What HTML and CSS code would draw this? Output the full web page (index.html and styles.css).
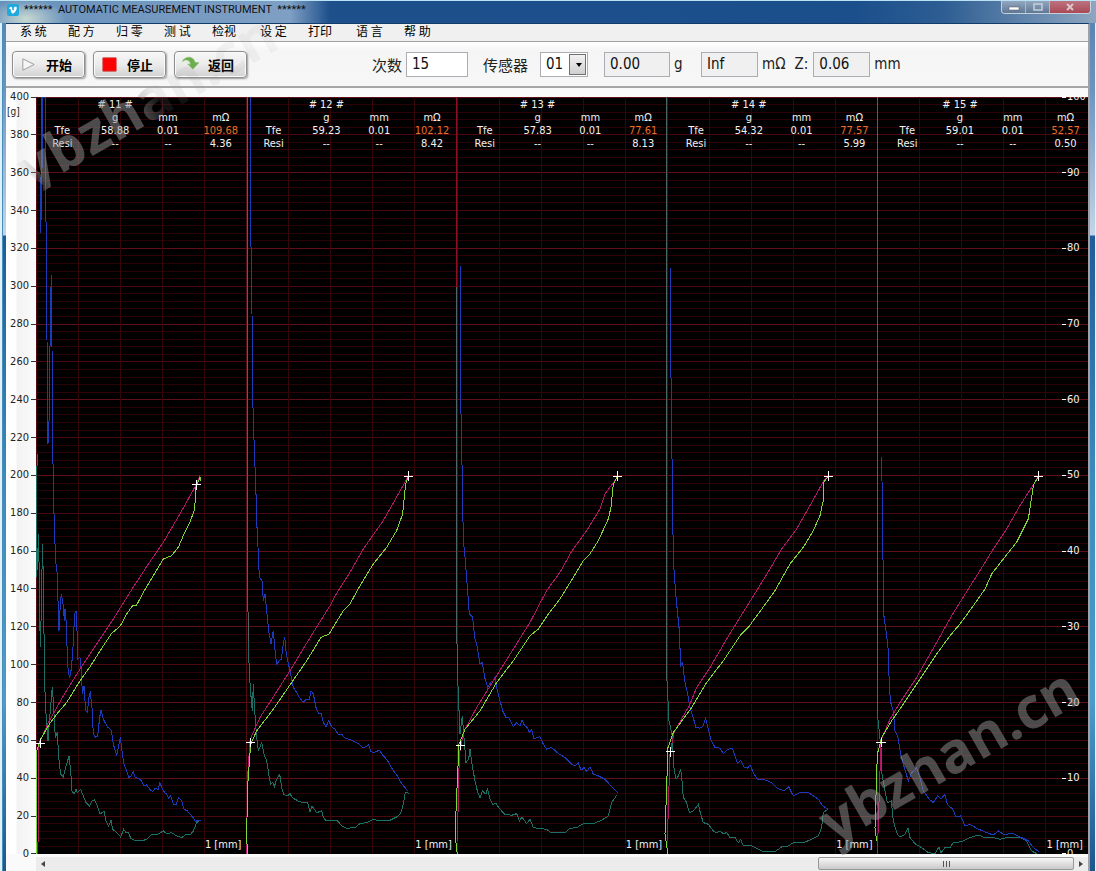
FILE: index.html
```html
<!DOCTYPE html>
<html lang="zh-CN">
<head>
	<meta charset="UTF-8">
	<title>AUTOMATIC MEASUREMENT INSTRUMENT</title>
	<link rel="stylesheet" href="styles.css">
</head>
<body>
	<div class="window">
		<header class="titlebar">
			<svg class="logo" viewBox="0 0 12 12">
				<rect width="12" height="12" rx="2" fill="#1fa9dc"/>
				<path d="M2 4 4 2.8C5 2.6 5 4 5.4 5.600 5.800 7 6.200 7 7 5.500 7.500 4.500 7 4.200 6.300 4.500 7 2.400 9.600 2 9.800 3.700 9.900 5.700 7.600 9.200 6 9.600 4.200 10 3.900 5.300 3.300 4.700L2.500 4.900Z" fill="#fff"/>
			</svg>
			<span class="title">******&nbsp; AUTOMATIC MEASUREMENT INSTRUMENT &nbsp;******</span>
			<div class="window-buttons">
				<button class="win-btn" aria-label="最小化"><svg viewBox="0 0 12 8"><rect x="1" y="4" width="10" height="3" fill="#fff" stroke="#556" stroke-width=".5"/></svg></button>
				<button class="win-btn" aria-label="最大化"><svg viewBox="0 0 12 8"><rect x="2" y="1" width="8" height="6" fill="none" stroke="#c5d0dd" stroke-width="1.5"/></svg></button>
				<button class="win-btn win-close" aria-label="关闭"><svg viewBox="0 0 12 8"><path d="M3 1 9 7M9 1 3 7" stroke="#dcc5ca" stroke-width="2"/></svg></button>
			</div>
		</header>

		<div class="client">
			<nav class="menu">
				<a href="#">系 统</a>
				<a href="#">配 方</a>
				<a href="#">归 零</a>
				<a href="#">测 试</a>
				<a href="#">检视</a>
				<a href="#">设 定</a>
				<a href="#">打印</a>
				<a href="#">语 言</a>
				<a href="#">帮 助</a>
			</nav>

			<div class="toolbar">
				<div class="actions">
					<button class="action">
						<svg viewBox="0 0 18 18"><path d="M3 3 15 9 3 15Z" fill="#f6f6f6" stroke="#999"/></svg>
						开始
					</button>
					<button class="action">
						<svg viewBox="0 0 18 18"><path d="M2 2H16V16H2Z" fill="#f00" stroke="#c33"/></svg>
						停止
					</button>
					<button class="action">
						<svg viewBox="0 0 18 18"><path d="M0 6C3 0 12-1 14 7H18L11.500 14 6 8.500H9C8 4 4 3 0 6Z" fill="#6cad50" stroke="#8bbf75" stroke-width=".6"/><path d="M0 7C4 4 7 5 8 9" fill="none" stroke="#d3e8c9"/></svg>
						返回
					</button>
				</div>
				<div class="fields">
					<label for="count">次数</label>
					<input type="text" id="count" class="count" value="15">
					<label for="sensor">传感器</label>
					<span class="select">
						<select id="sensor">
							<option>01</option>
							<option>02</option>
						</select>
					</span>
					<input type="text" id="force" class="force" value="0.00" readonly>
					<label for="force" class="unit-g">g</label>
					<input type="text" id="resistance" value="Inf" readonly>
					<label for="resistance">mΩ</label>
					<label for="depth" class="unit-z">Z:</label>
					<input type="text" id="depth" value="0.06" readonly>
					<label for="depth">mm</label>
				</div>
			</div>

			<main class="chart">
				<div class="left-axis">
					<span class="axis-unit">[g]</span>
					<ul class="scale" id="force-scale"></ul>
				</div>
				<div class="plot">
					<svg class="traces" viewBox="0 0 3156 2268" preserveAspectRatio="none" id="traces"></svg>
					<div class="readouts" id="readouts"></div>
					<div class="spans" id="spans"></div>
					<ul class="scale right-scale" id="resistance-scale"></ul>
				</div>
			</main>

			<div class="scrollbar">
				<button class="scroll-arrow" aria-label="向左"><svg viewBox="0 0 4 6"><path d="M4 0V6L0 3Z" fill="#444"/></svg></button>
				<div class="scroll-track">
					<div class="scroll-thumb"><i></i><i></i><i></i></div>
				</div>
				<button class="scroll-arrow" aria-label="向右"><svg viewBox="0 0 4 6"><path d="M0 0V6L4 3Z" fill="#444"/></svg></button>
			</div>
		</div>

		<span class="watermark watermark-top">ybzhan.cn</span>
		<span class="watermark watermark-bottom">ybzhan.cn</span>
	</div>

	<script src="chart.js"></script>
</body>
</html>
```
FILE: styles.css
```css
* {
	margin: 0;
	padding: 0;
	box-sizing: border-box;
}

body {
	font-family: "DejaVu Sans Condensed", "Noto Sans", "Noto Sans CJK SC", sans-serif;
	font-size: 11px;
	color: #222;
}

button,
input,
select {
	font-family: inherit;
}

ul {
	list-style: none;
}

.window {
	position: relative;
	display: flex;
	flex-direction: column;
	min-height: 100vh;
	overflow: hidden;
	padding: 0 6px 0 6px;
	border-top: 1px solid #b9e2f5;
	background:
		linear-gradient(90deg, #dff1fb 2px, #4a8fbb 2px, #4a8fbb 3px, transparent 3px, transparent calc(100% - 1px), #dff1fb calc(100% - 1px)),
		linear-gradient(180deg, #5580ad 0, #6c94be 90px, #c3d6e8 234px, #1f5c99 235px, #3a8cbd 480px, #4a9cca 700px, #1c568c 100%);
}

/* title bar */
.titlebar {
	display: flex;
	align-items: flex-start;
	height: 22px;
	margin: 0 -6px;
	padding: 0 5px 0 7px;
	background:
		radial-gradient(ellipse 40px 20px at 26px 18px, rgba(225, 235, 215, 0.8), transparent),
		linear-gradient(90deg, #6791bb 0, #7f9fc4 290px, #1d4f8b 330px, #1b4f8c 78%, #2d5d92 86%, #8ea6c0 100%);
}

.logo {
	width: 12px;
	height: 12px;
	margin-top: 3px;
}

.title {
	margin-left: 5px;
	font-family: Roboto, sans-serif;
	font-size: 11px;
	line-height: 18px;
	color: #111;
}

.window-buttons {
	display: flex;
	margin-left: auto;
	border: 1px solid #c4d2e0;
	border-top: 0;
	border-radius: 0 0 4px 4px;
	overflow: hidden;
}

.win-btn {
	display: flex;
	align-items: center;
	justify-content: center;
	width: 24px;
	height: 12px;
	border: 0;
	border-right: 1px solid #a9bbcd;
	background: linear-gradient(#93a7bf, #5f7894);
}

.win-btn svg {
	width: 12px;
	height: 8px;
}

.win-close {
	width: 40px;
	border-right: 0;
	background: linear-gradient(#bd7380, #a94a55);
}

.client {
	flex: 1;
	display: flex;
	flex-direction: column;
	border-top: 1px solid #123c69;
	border-right: 2px solid #a0a0a8;
	background: #fafafa;
}

/* menu */
.menu {
	display: flex;
	height: 18px;
	padding-left: 14px;
	border-bottom: 1px solid #a0a0a0;
	background: #f0f0f0;
}

.menu a {
	width: 48px;
	font-family: "Noto Sans CJK SC", sans-serif;
	font-size: 12px;
	line-height: 14px;
	color: #000;
	text-decoration: none;
	white-space: nowrap;
}

/* toolbar */
.toolbar {
	display: flex;
	align-items: center;
	height: 46px;
	padding-left: 6px;
	border-bottom: 2px solid #a6a6a6;
	background: linear-gradient(#fff, #f5f5f5 20%, #f7f7f7);
}

.actions {
	display: flex;
	gap: 8px;
}

.action {
	display: flex;
	align-items: center;
	gap: 9px;
	width: 73px;
	height: 27px;
	padding-left: 7px;
	border: 1px solid #8f8f8f;
	border-radius: 4px;
	background: linear-gradient(#f7f7f7, #ebebeb 50%, #d2d2d2);
	box-shadow: inset 0 0 0 1px #fafafa, 1px 1px 2px #999;
	font-family: "Noto Sans CJK SC", sans-serif;
	font-size: 13px;
	font-weight: 700;
	color: #000;
	white-space: nowrap;
}

.action svg {
	flex: none;
	width: 17px;
	height: 17px;
}

.fields {
	display: flex;
	align-items: center;
	margin-left: 121px;
	color: #222;
}

.fields label {
	margin: 0 4px;
	font-size: 15px;
}

.fields label[for="count"],
.fields label[for="sensor"] {
	font-family: "Noto Sans CJK SC", sans-serif;
}

.fields label[for="sensor"] {
	margin: 0 12px 0 15px;
}

.fields input,
.fields select {
	width: 57px;
	height: 25px;
	padding: 0 5px;
	border: 1px solid #abadb3;
	background: #fff;
	font-size: 15px;
	color: #111;
}

.fields input[readonly] {
	background: #f0f0f0;
}

.fields .count {
	width: 62px;
}

.fields .force {
	width: 66px;
	margin-left: 16px;
}

.fields .unit-g {
	width: 23px;
	margin-right: 4px;
}

.fields .unit-z {
	margin: 0 5px;
}

.select {
	position: relative;
}

.fields select {
	width: 48px;
	appearance: none;
}

.select::before {
	content: "";
	position: absolute;
	top: 2px;
	right: 2px;
	width: 15px;
	bottom: 2px;
	border: 1px solid #707070;
	background: linear-gradient(#f2f2f2, #cfcfcf);
	pointer-events: none;
}

.select::after {
	content: "";
	position: absolute;
	top: 11px;
	right: 6px;
	border: 3px solid transparent;
	border-top: 4px solid #000;
	border-bottom: 0;
	pointer-events: none;
}

/* chart */
.chart {
	flex: 1;
	display: flex;
	margin-top: 9px;
}

.left-axis {
	position: relative;
	width: 30px;
	background: linear-gradient(90deg, #fff 10px, #f3f3f3 11px, #fafafa);
}

.axis-unit {
	position: absolute;
	top: 9px;
	left: 1px;
	font-size: 10px;
}

.scale {
	display: flex;
	flex-direction: column;
	justify-content: space-between;
	position: relative;
	height: calc(100% + 14px);
	margin: -7px 0;
}

.scale li {
	display: flex;
	align-items: center;
	justify-content: flex-end;
	height: 14px;
	line-height: 14px;
}

.scale li::after {
	content: "";
	width: 5px;
	height: 1px;
	margin-left: 2px;
	background: #333;
}

.plot {
	position: relative;
	flex: 1;
	overflow: hidden;
	background: #000;
	color: #f2f2f2;
}

.traces {
	position: absolute;
	width: 100%;
	height: 100%;
	fill: none;
	stroke-width: 1px;
	shape-rendering: crispEdges;
}

.traces * {
	vector-effect: non-scaling-stroke;
}

.grid-minor {
	stroke: #2b0306;
}

.grid-major {
	stroke: #4c080d;
}

.grid-strong {
	stroke: #621016;
}

.grid-vertical {
	stroke: #34060a;
}

.track-start {
	stroke: #560a14;
}

.contact {
	stroke: #4c6666;
}

.contact-force {
	stroke: #8a1022;
}

.blue {
	stroke: #1a3cb8;
}

.teal {
	stroke: #1c6f64;
}

.magenta {
	stroke: #b0186c;
}

.green {
	stroke: #7fd636;
}

.cursor {
	stroke: #fff;
}

.readouts {
	position: relative;
	display: grid;
	grid-template-columns: repeat(5, 1fr);
	margin-right: -4px;
	padding-top: 1px;
}

.readouts table {
	width: 100%;
	table-layout: fixed;
	border-collapse: collapse;
	text-align: center;
	line-height: 13px;
}

.readouts th,
.readouts td {
	height: 13px;
	font-weight: 400;
}

.readouts .limit {
	color: #e8702a;
}

.spans {
	position: absolute;
	right: 0;
	bottom: 2px;
	left: 0;
	display: grid;
	grid-template-columns: repeat(5, 1fr);
	text-align: right;
}

.spans span {
	padding-right: 5px;
	line-height: 14px;
}

.right-scale {
	position: absolute;
	top: 0;
	right: 0;
	width: 26px;
}

.right-scale li {
	justify-content: flex-start;
}

.right-scale li::after {
	order: -1;
	width: 4px;
	margin: 0 1px 0 0;
	background: #fff;
}

/* scroll bar */
.scrollbar {
	display: flex;
	height: 17px;
	margin-left: 30px;
	border-top: 3px solid #fafafa;
	background: #ececec;
}

.scroll-arrow {
	display: flex;
	align-items: center;
	justify-content: center;
	width: 14px;
	border: 0;
	background: transparent;
}

.scroll-arrow svg {
	width: 4px;
	height: 6px;
}

.scroll-track {
	flex: 1;
	display: flex;
	justify-content: flex-end;
}

.scroll-thumb {
	display: flex;
	align-items: center;
	justify-content: center;
	gap: 2px;
	width: 25%;
	height: 13px;
	border: 1px solid #979797;
	border-radius: 2px;
	background: linear-gradient(#f5f5f5, #e3e3e3 45%, #c9c9c9);
}

.scroll-thumb i {
	width: 1px;
	height: 6px;
	background: #555;
}

/* watermark */
.watermark {
	position: absolute;
	font-family: "Open Sans", sans-serif;
	font-size: 57px;
	font-weight: 700;
	line-height: 56px;
	color: rgba(150, 150, 150, 0.5);
	transform: rotate(-30deg);
	transform-origin: 0 50px;
	white-space: nowrap;
	pointer-events: none;
}

.watermark-top {
	top: 140px;
	left: 32px;
	background: linear-gradient(90deg, rgba(150, 150, 150, 0.1) 2%, rgba(150, 150, 150, 0.5) 6%, rgba(150, 150, 150, 0.5) 46%, rgba(150, 150, 150, 0.12) 54%, rgba(150, 150, 150, 0.08));
	background-clip: text;
	-webkit-background-clip: text;
	color: transparent;
}

.watermark-bottom {
	bottom: 20px;
	left: calc(100% - 262px);
}
```
FILE: chart.js
```js
// 3 units per screen pixel; trace points are relative to the y = 1149 line
const WIDTH = 3156;
const HEIGHT = 2268;
const TRACE_TOP = 1149;

const tracks = [
	{
		no: 11, x: -108, force: "58.88", travel: "0.01", tfe: "109.68", resi: "4.36",
		cursors: [[121, 787], [590, 13]],
		blue: "124,-1149 123,-900 121,-741 125,-820 128,-1149 136,-1149 139,-600 141,-420 144,-110 148,-200 151,-500 154,-615 156,-400 157,-150 160,0 161,60 164,170 168,250 172,280 175,400 177,450 181,370 184,340 190,375 193,420 195,385 200,440 202,550 208,588 212,580 218,520 224,400 228,390 231,450 234,535 240,530 244,570 247,640 252,615 257,690 262,695 268,640 271,635 276,680 280,760 287,770 293,765 299,710 303,688 310,715 322,738 334,748 340,790 350,824 355,800 361,768 366,810 372,850 380,870 386,890 392,886 400,873 405,888 415,893 425,900 432,915 440,912 450,926 458,932 466,922 474,926 480,905 486,922 494,935 500,940 506,952 512,945 520,970 528,972 536,950 545,960 552,985 562,990 570,1000 580,1010 586,1022 594,1018 602,1020",
		teal: "112,-80 110,0 110,290 116,160 119,400 121,498 125,350 127,190 131,320 133,590 138,700 144,780 150,700 157,618 161,680 166,770 172,755 176,830 182,880 190,888 197,860 203,840 207,825 212,870 216,930 222,940 228,925 232,935 242,925 250,945 258,965 268,975 276,960 284,957 292,975 300,1000 312,990 318,1020 326,1035 333,1018 338,1045 350,1055 362,1068 371,1045 378,1055 385,1055 393,1073 410,1080 425,1080 440,1075 455,1060 470,1062 490,1050 500,1058 515,1055 530,1065 545,1070 555,1062 570,1062 580,1050 590,1025 600,1018",
		magenta: "111,1120 116,1060 117,800 122,778 145,725 165,690 190,645 240,565 290,490 340,415 390,335 440,258 490,185 540,100 590,10 600,-15",
		green: "111,1120 109,1000 110,810 122,775 148,730 170,700 200,665 240,600 270,558 310,495 335,458 360,437 380,400 398,375 410,373 430,335 460,285 490,235 515,225 535,200 550,165 570,125 584,85 588,20 600,-10 602,0"
	},
	{
		no: 12, x: 612, force: "59.23", travel: "0.01", tfe: "102.12", resi: "8.42",
		cursors: [[31, 785], [505, -13]],
		contact: "22,-1149 23,300 25,480",
		blue: "32,-1149 33,-700 36,-500 38,-250 44,-60 47,0 50,120 54,200 58,290 66,300 70,360 75,340 80,390 86,450 93,490 97,465 100,450 104,500 110,550 118,540 124,535 130,490 134,468 138,510 143,540 150,570 160,620 170,635 178,650 190,665 198,655 208,655 213,630 220,640 228,680 236,698 243,698 250,725 258,738 266,720 275,738 285,745 295,762 305,760 315,772 335,778 355,788 368,800 378,798 386,792 392,812 402,815 418,808 430,825 442,838 455,862 470,882 485,908 505,932",
		teal: "25,480 28,580 34,660 37,690 40,610 44,690 50,770 55,810 65,785 72,820 80,840 88,890 92,910 98,905 103,917 110,895 119,880 125,920 132,942 145,943 150,937 155,948 165,955 180,963 203,965 210,992 216,975 230,995 245,990 250,1008 258,1020 275,1020 293,1020 305,1035 320,1042 345,1040 360,1028 380,1025 400,1015 420,1020 450,1018 470,1008 482,998 490,970 496,935 508,937",
		magenta: "20,1120 22,900 30,780 35,765 60,710 100,648 150,570 180,520 220,455 270,375 290,338 330,275 370,205 430,120 495,5 505,-13",
		green: "22,1120 20,1050 24,900 32,790 50,750 100,685 155,605 200,540 243,470 267,460 310,390 330,370 360,315 400,250 440,200 470,150 488,100 497,10 505,-13"
	},
	{
		no: 13, x: 1242, force: "57.83", travel: "0.01", tfe: "77.61", resi: "8.13",
		cursors: [[31, 793], [503, -13]],
		contactForce: "20,-1149 20,-580",
		contact: "20,-580 20,400 22,570",
		blue: "31,-642 33,-200 37,0 40,180 46,240 52,320 58,400 68,410 74,470 82,500 90,550 97,545 104,590 113,620 122,605 130,600 135,588 140,620 150,660 158,690 168,710 178,712 190,738 200,725 210,735 216,718 224,735 232,740 238,755 245,745 252,775 260,770 270,768 280,790 290,805 305,800 325,818 345,830 365,850 375,855 385,846 393,868 402,860 410,872 420,858 430,880 445,885 465,895 480,912 505,937",
		teal: "22,570 25,640 30,760 37,705 42,770 48,845 56,835 60,805 66,850 74,895 82,930 90,950 97,930 108,940 112,922 120,955 128,970 138,968 150,985 165,1000 185,1003 200,998 208,1020 216,1008 230,1028 240,1015 250,1040 270,1043 290,1045 305,1056 345,1055 360,1042 380,1040 400,1028 430,1028 455,1018 475,1005 485,965 500,943",
		magenta: "22,1080 28,820 40,755 80,680 130,600 190,505 240,425 290,330 330,275 365,212 410,150 450,85 465,40 495,0 503,-13",
		green: "22,1120 15,1060 22,900 27,790 45,745 90,690 140,605 190,540 240,465 265,445 295,400 330,355 370,290 400,240 420,220 445,180 475,115 483,80 490,10 503,-13"
	},
	{
		no: 14, x: 1872, force: "54.32", travel: "0.01", tfe: "77.57", resi: "5.99",
		cursors: [[31, 813], [505, -13]],
		contact: "20,-1149 21,600",
		blue: "30,-642 34,-200 37,0 40,240 48,350 58,450 62,555 68,545 74,600 82,635 90,680 98,705 108,740 118,742 128,738 137,712 145,745 152,775 165,800 180,802 190,818 203,805 217,802 225,825 233,848 242,838 252,858 262,862 270,852 280,875 292,895 315,897 335,905 352,922 372,930 386,918 400,945 420,935 445,935 460,945 475,955 488,975 505,985",
		teal: "21,600 27,720 38,770 40,850 48,895 55,885 62,865 66,900 70,950 80,965 88,995 100,990 115,970 122,1000 130,1025 145,1030 160,1050 170,1056 180,1050 190,1058 200,1055 210,1070 225,1070 235,1085 242,1075 250,1095 270,1092 285,1100 305,1110 345,1112 365,1098 385,1095 400,1085 430,1085 455,1075 475,1065 485,1040 490,995 503,985",
		magenta: "22,1080 30,820 42,755 90,670 110,620 150,560 200,475 240,410 290,330 330,265 365,205 410,145 450,75 492,0 505,-13",
		green: "24,1120 15,1060 24,800 40,755 95,680 140,605 190,540 240,465 265,440 320,365 345,330 390,250 430,200 460,150 480,105 490,60 491,5 505,-13"
	},
	{
		no: 15, x: 2502, force: "59.01", travel: "0.01", tfe: "52.57", resi: "0.50",
		cursors: [[33, 785], [505, -13]],
		contact: "22,-1149 22,700",
		blue: "33,-72 36,0 38,150 41,400 48,450 55,510 58,620 62,665 70,690 75,750 84,770 92,820 100,850 115,900 125,875 133,870 140,860 150,890 160,930 178,955 190,965 203,945 213,955 224,940 232,970 248,985 258,1008 272,1005 285,1035 300,1030 320,1042 350,1055 370,1062 386,1050 400,1060 430,1058 455,1070 475,1080 490,1100 507,1112",
		teal: "22,700 33,800 36,880 45,930 52,965 64,960 70,1020 82,1060 90,1068 105,1060 114,1042 120,1070 135,1088 155,1100 175,1115 195,1118 207,1098 213,1115 225,1100 240,1100 250,1085 275,1082 300,1070 325,1062 345,1070 370,1070 390,1075 410,1070 450,1070 470,1080 485,1110 500,1118",
		magenta: "22,1120 33,780 60,715 90,665 140,590 200,485 245,405 295,325 330,270 370,205 410,145 450,75 495,5 505,-13",
		green: "20,1080 15,1040 22,820 35,770 65,720 100,670 150,595 200,520 240,465 270,430 310,375 345,325 365,280 400,235 440,185 475,115 485,50 490,15 505,-13"
	}
];

function line(x1, y1, x2, y2, cls) {
	return `<line class="${cls}" x1="${x1}" y1="${y1}" x2="${x2}" y2="${y2}"/>`;
}

function polyline(points, cls) {
	return points ? `<polyline class="${cls}" points="${points}"/>` : "";
}

function drawGrid() {
	let svg = "";
	for (let i = 0; i <= 100; i++) {
		let cls = "grid-minor";
		if (i % 5 == 0) cls = "grid-major";
		if (i % 10 == 0) cls = "grid-strong";
		let y = i * HEIGHT / 100;
		svg += line(0, y, WIDTH, y, cls);
	}
	for (let i = 0; i <= 25; i++) {
		let x = 1 + i * 126.2;
		svg += line(x, 0, x, HEIGHT, i % 5 == 0 ? "track-start" : "grid-vertical");
	}
	return svg;
}

function drawTrack(t) {
	let svg = `<g transform="translate(${t.x} ${TRACE_TOP})">`;
	svg += polyline(t.contactForce, "contact-force");
	svg += polyline(t.contact, "contact");
	svg += polyline(t.teal, "teal");
	svg += polyline(t.blue, "blue");
	svg += polyline(t.magenta, "magenta");
	svg += polyline(t.green, "green");
	for (let [x, y] of t.cursors) {
		svg += line(x - 14, y, x + 14, y, "cursor") + line(x, y - 14, x, y + 14, "cursor");
	}
	return svg + "</g>";
}

function readout(t) {
	return `
		<table>
			<tr><td></td><th># ${t.no} #</th><td></td><td></td></tr>
			<tr><td></td><th>g</th><th>mm</th><th>mΩ</th></tr>
			<tr><th>Tfe</th><td>${t.force}</td><td>${t.travel}</td><td class="limit">${t.tfe}</td></tr>
			<tr><th>Resi</th><td>--</td><td>--</td><td>${t.resi}</td></tr>
		</table>
	`;
}

function scale(max, step) {
	let html = "";
	for (let v = max; v >= 0; v -= step) {
		html += `<li>${v}</li>`;
	}
	return html;
}

document.querySelector("#traces").innerHTML = drawGrid() + tracks.map(drawTrack).join("");
document.querySelector("#readouts").innerHTML = tracks.map(readout).join("");
document.querySelector("#spans").innerHTML = tracks.map(() => "<span>1 [mm]</span>").join("");
document.querySelector("#force-scale").innerHTML = scale(400, 20);
document.querySelector("#resistance-scale").innerHTML = scale(100, 10);
```
